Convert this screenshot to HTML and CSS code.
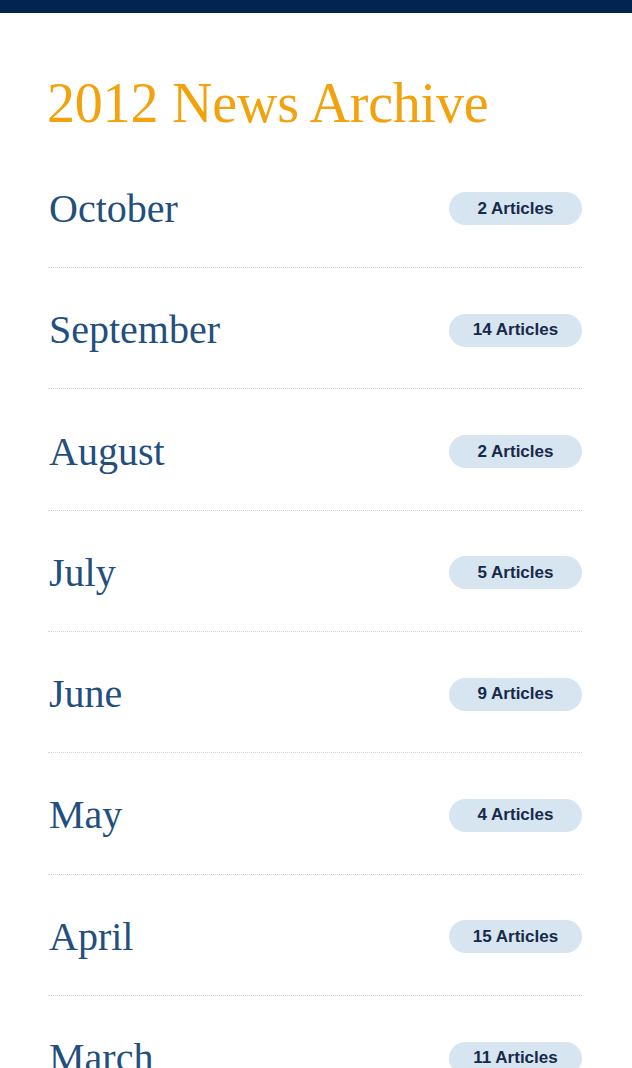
FILE: index.html
```html
<!DOCTYPE html>
<html lang="en">
<head>
<meta charset="utf-8">
<title>2012 News Archive</title>
<link rel="stylesheet" href="styles.css">
</head>
<body>
<div class="topbar"></div>
<main class="page">
  <h1 class="title">2012 News Archive</h1>
  <ul class="months">
    <li class="row"><span class="month">October</span><span class="badge">2 Articles</span></li>
    <li class="row"><span class="month">September</span><span class="badge">14 Articles</span></li>
    <li class="row"><span class="month">August</span><span class="badge">2 Articles</span></li>
    <li class="row"><span class="month">July</span><span class="badge">5 Articles</span></li>
    <li class="row"><span class="month">June</span><span class="badge">9 Articles</span></li>
    <li class="row"><span class="month">May</span><span class="badge">4 Articles</span></li>
    <li class="row"><span class="month">April</span><span class="badge">15 Articles</span></li>
    <li class="row"><span class="month">March</span><span class="badge">11 Articles</span></li>
  </ul>
</main>
</body>
</html>
```
FILE: styles.css
```css
html, body {
  margin: 0;
  padding: 0;
  background: #ffffff;
  overflow: hidden;
}
.topbar {
  height: 13px;
  background: #00264f;
}
.page {
  padding: 60px 50px 0 47px;
}
.title {
  margin: 0 0 13.7px 0;
  font-family: "Liberation Serif", "Times New Roman", serif;
  font-weight: normal;
  font-size: 56px;
  line-height: 60px;
  color: #f2a20c;
  letter-spacing: -0.2px;
}
.months {
  list-style: none;
  margin: 0;
  padding: 0;
}
.row {
  display: flex;
  align-items: center;
  justify-content: space-between;
  height: 116.33px;
  padding-top: 4px;
  border-bottom: 1px dotted #ccd5dd;
  margin-left: 1px;
}
.month {
  font-family: "Liberation Serif", "Times New Roman", serif;
  font-size: 40px;
  line-height: 48px;
  color: #234f7e;
  padding-left: 1px;
}
.badge {
  display: flex;
  align-items: center;
  justify-content: center;
  width: 133px;
  height: 33px;
  border-radius: 17px;
  background: #d7e5f0;
  font-family: "Liberation Sans", Arial, sans-serif;
  font-weight: bold;
  font-size: 17px;
  color: #16294a;
}
```
